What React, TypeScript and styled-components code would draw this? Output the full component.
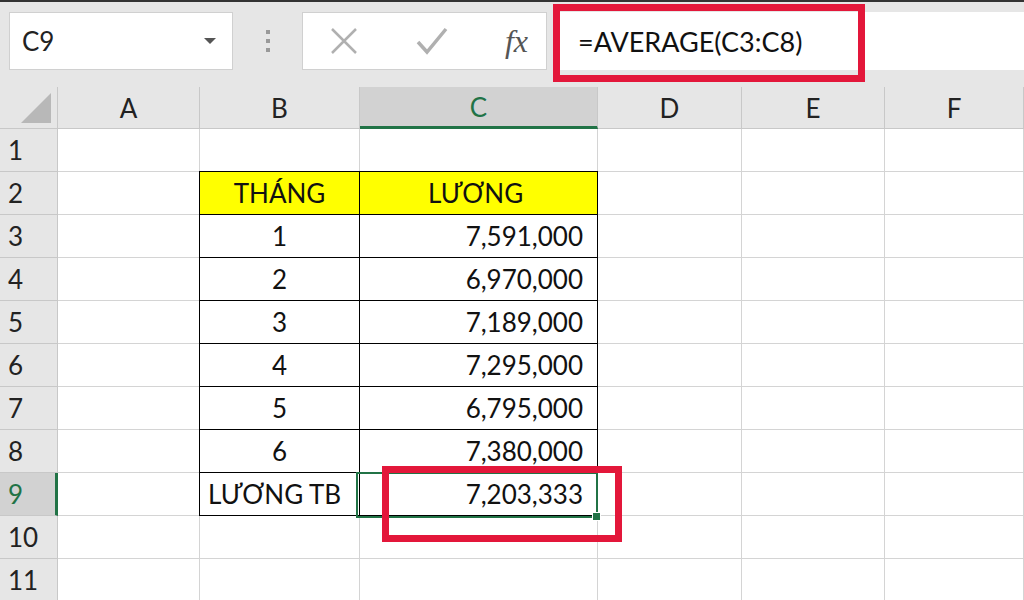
import React from "react";
import styled, { createGlobalStyle, css } from "styled-components";

const Global = createGlobalStyle`
  html, body { margin: 0; padding: 0; background: #fff; }
  body { width: 1024px; height: 600px; overflow: hidden; font-family: Lato, "Open Sans", "Liberation Sans", sans-serif; }
`;

const Page = styled.div`
  position: relative; width: 1024px; height: 600px; overflow: hidden;
  border-top: 2px solid #333; box-sizing: border-box;
`;
const Toolbar = styled.div`
  height: 85px; background: #e6e6e6; display: flex; align-items: flex-start;
  padding: 10px 0 0 9px; box-sizing: border-box; gap: 0;
`;
const NameBox = styled.div`
  width: 224px; height: 58px; background: #fff; border: 1px solid #d0d0d0; box-sizing: border-box;
  display: flex; align-items: center; justify-content: space-between; padding: 0 16px 0 12px;
  font-size: 26px; color: #222;
`;
const Caret = styled.span`
  width: 0; height: 0; border-left: 6px solid transparent; border-right: 6px solid transparent;
  border-top: 6px solid #555;
`;
const Dots = styled.div`
  width: 69px; height: 58px; display: flex; flex-direction: column; align-items: center; justify-content: center; gap: 5px;
  & span { width: 4px; height: 4px; background: #999; }
`;
const FxBox = styled.div`
  width: 245px; height: 58px; background: #fff; border: 1px solid #d0d0d0; box-sizing: border-box;
  display: flex; align-items: center; justify-content: space-between; padding: 0 18px 0 26px;
`;
const Fx = styled.span`
  font-family: "Liberation Serif", "DejaVu Serif", serif; font-style: italic; font-size: 32px; color: #555;
`;
const FormulaBox = styled.div`
  margin-left: 6px; flex: 1; height: 58px; background: #fff; box-sizing: border-box;
  display: flex; align-items: center; padding-left: 25px; font-size: 27px; color: #111;
`;
const Grid = styled.div`
  display: grid; grid-template-columns: 58px 142px 160px 238px 144px 143px 1fr;
  grid-template-rows: 42px repeat(11, 43px);
`;
const Cell = styled.div<{ $head?: boolean; $active?: boolean; $row?: boolean; $align?: string; $bg?: string; $box?: boolean }>`
  box-sizing: border-box; border-right: 1px solid #d4d4d4; border-bottom: 1px solid #d4d4d4;
  display: flex; align-items: center; justify-content: ${p => p.$align || "center"};
  padding: 0 14px; font-size: 26px; color: #111; background: ${p => p.$bg || "#fff"};
  ${p => p.$head && css`background: #e6e6e6; color: #222; border-color: #c8c8c8;`}
  ${p => p.$row && css`justify-content: flex-start; padding-left: 8px;`}
  ${p => p.$active && p.$head && !p.$row && css`background: #d2d2d2; color: #217346; border-bottom: 3px solid #217346;`}
  ${p => p.$active && p.$row && css`background: #d2d2d2; color: #217346; border-right: 3px solid #217346;`}
  ${p => p.$box && css`border: 1px solid #000; margin: -1px 0 0 -1px; width: calc(100% + 1px); height: calc(100% + 1px);`}
`;
const Corner = styled.div`
  width: 0; height: 0; border-left: 30px solid transparent; border-bottom: 30px solid #b8b8b8;
  margin-top: 6px;
`;
const Selection = styled.div`
  position: absolute; left: 356px; top: 470px; width: 242px; height: 46px;
  border: 2px solid #217346; box-sizing: border-box;
`;
const Handle = styled.div`
  position: absolute; right: -5px; bottom: -5px; width: 7px; height: 7px; background: #217346; border: 1px solid #fff;
`;
const RedBox = styled.div<{ $l: number; $t: number; $w: number; $h: number }>`
  position: absolute; left: ${p => p.$l}px; top: ${p => p.$t}px; width: ${p => p.$w}px; height: ${p => p.$h}px;
  border: 7px solid #e3173a; box-sizing: border-box;
`;

const cols = ["A", "B", "C", "D", "E", "F"];
const data: Record<number, [string, string]> = {
  2: ["THÁNG", "LƯƠNG"],
  3: ["1", "7,591,000"], 4: ["2", "6,970,000"], 5: ["3", "7,189,000"],
  6: ["4", "7,295,000"], 7: ["5", "6,795,000"], 8: ["6", "7,380,000"], 9: ["LƯƠNG TB", "7,203,333"],
};

export default function App() {
  const rows = Array.from({ length: 11 }, (_, i) => i + 1);
  return (
    <Page>
      <Global />
      <Toolbar>
        <NameBox>C9<Caret /></NameBox>
        <Dots><span /><span /><span /></Dots>
        <FxBox>
          <svg width="30" height="30" viewBox="0 0 30 30"><path d="M3 3L27 27M27 3L3 27" stroke="#b0b0b0" strokeWidth="2.5" /></svg>
          <svg width="34" height="30" viewBox="0 0 34 30"><path d="M3 16L12 26L31 3" stroke="#b0b0b0" strokeWidth="3.5" fill="none" /></svg>
          <Fx>fx</Fx>
        </FxBox>
        <FormulaBox>=AVERAGE(C3:C8)</FormulaBox>
      </Toolbar>
      <Grid>
        <Cell $head style={{ justifyContent: "flex-end", alignItems: "flex-start", padding: "0 6px 0 0" }}><Corner /></Cell>
        {cols.map(c => <Cell key={c} $head $active={c === "C"}>{c}</Cell>)}
        {rows.map(r => {
          const d = data[r];
          return (
            <React.Fragment key={r}>
              <Cell $head $row $active={r === 9}>{r}</Cell>
              <Cell />
              {d ? (
                <>
                  <Cell $box $bg={r === 2 ? "#ffff00" : undefined} $align={r === 9 ? "flex-start" : "center"} style={r === 9 ? { paddingLeft: 8 } : undefined}>{d[0]}</Cell>
                  <Cell $box $bg={r === 2 ? "#ffff00" : undefined} $align={r === 2 ? "flex-start" : "flex-end"} style={r === 2 ? { paddingLeft: 68 } : undefined}>{d[1]}</Cell>
                </>
              ) : (<><Cell /><Cell /></>)}
              <Cell /><Cell /><Cell />
            </React.Fragment>
          );
        })}
      </Grid>
      <Selection><Handle /></Selection>
      <RedBox $l={553} $t={2} $w={312} $h={78} />
      <RedBox $l={382} $t={464} $w={240} $h={76} />
    </Page>
  );
}
